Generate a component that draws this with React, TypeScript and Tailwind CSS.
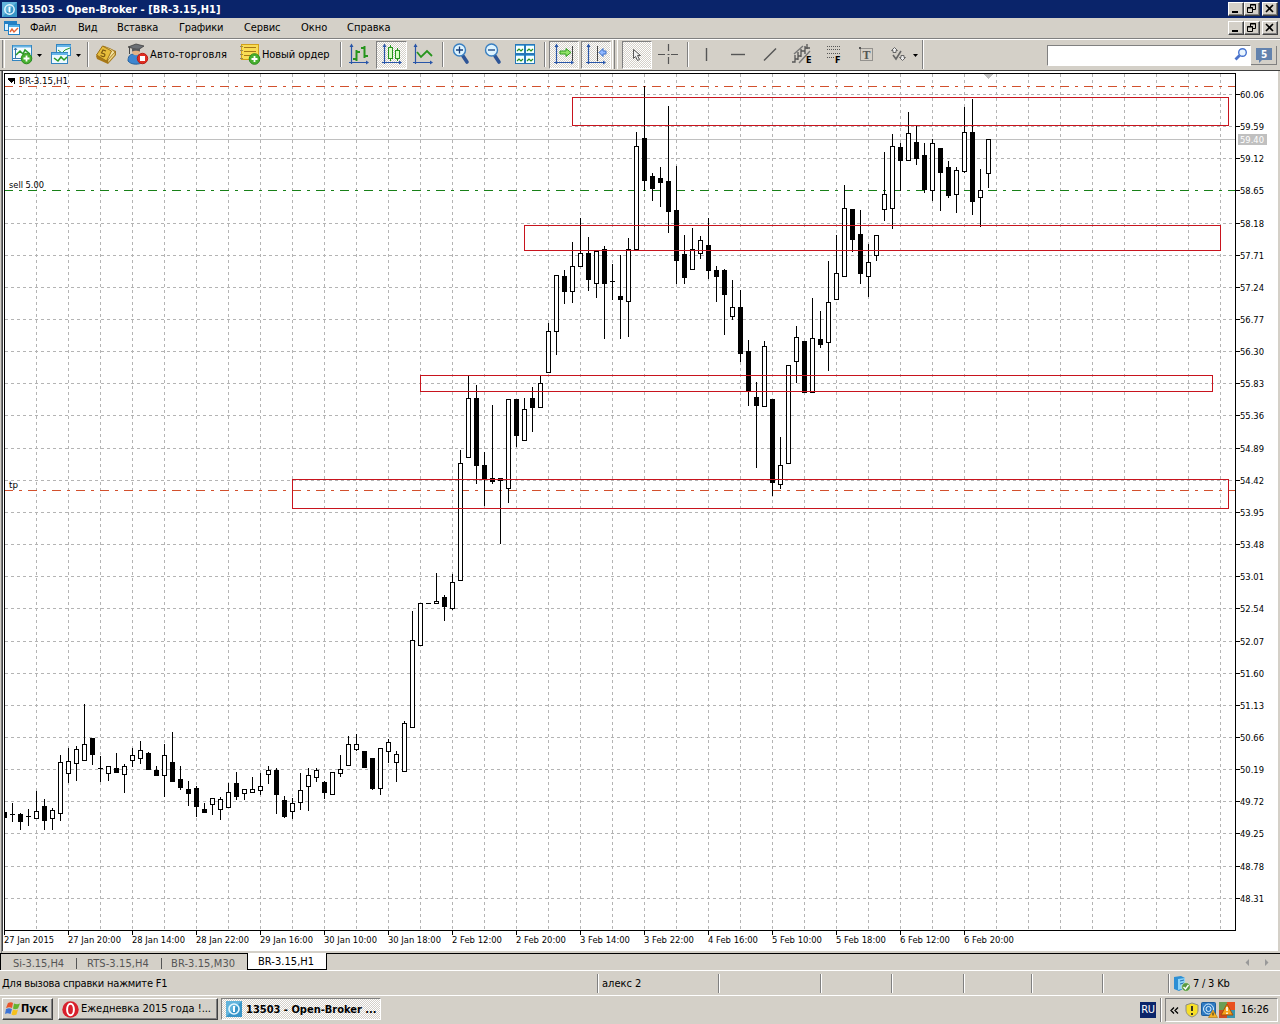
import type { ReactNode } from "react";

type Kind = 0 | 1; // 0 hollow, 1 filled
// [high, body top, body bottom, low, kind]; bars are 8px apart starting at x = 4
const BARS: [number, number, number, number, Kind][] = [
  [812, 812, 817, 817, 1], [803, 814, 814, 821, 1], [813, 814, 821, 829, 1], [809, 816, 816, 825, 1], [791, 811, 818, 818, 0],
  [799, 806, 820, 829, 1], [808, 810, 818, 829, 0], [755, 762, 813, 820, 0], [748, 761, 773, 782, 0], [746, 749, 763, 780, 0],
  [704, 744, 760, 760, 0], [738, 738, 754, 764, 1], [756, 768, 768, 781, 1], [766, 766, 773, 780, 0], [753, 768, 772, 772, 1],
  [764, 766, 774, 792, 0], [748, 755, 760, 766, 0], [741, 750, 758, 763, 0], [752, 753, 769, 769, 1], [766, 770, 775, 775, 1],
  [744, 755, 775, 796, 0], [732, 762, 781, 781, 1], [766, 779, 787, 789, 1], [781, 789, 793, 805, 1], [786, 788, 806, 816, 1],
  [803, 809, 812, 812, 1], [798, 798, 804, 814, 0], [797, 799, 809, 819, 0], [783, 792, 807, 807, 0], [772, 783, 796, 799, 1],
  [789, 789, 793, 799, 0], [777, 789, 792, 792, 0], [773, 786, 790, 794, 0], [766, 770, 774, 783, 0], [768, 770, 794, 813, 1],
  [796, 800, 816, 817, 1], [798, 803, 811, 818, 0], [773, 790, 802, 809, 0], [768, 775, 786, 810, 0], [768, 770, 777, 781, 0],
  [781, 782, 792, 798, 1], [772, 772, 794, 794, 0], [755, 769, 773, 776, 0], [736, 744, 765, 765, 0], [734, 744, 749, 750, 0],
  [751, 751, 767, 767, 1], [758, 758, 788, 789, 1], [748, 748, 788, 794, 0], [739, 742, 751, 762, 0], [751, 754, 762, 781, 0],
  [721, 723, 771, 771, 0], [611, 640, 727, 727, 0], [603, 603, 645, 645, 0], [603, 603, 603, 603, 1], [573, 601, 603, 603, 0],
  [595, 597, 606, 620, 1], [574, 582, 608, 609, 0], [450, 463, 580, 580, 0], [376, 398, 457, 457, 0], [385, 398, 465, 483, 1],
  [452, 465, 478, 505, 1], [405, 478, 481, 483, 1], [478, 478, 480, 543, 1], [399, 399, 488, 502, 0], [399, 399, 435, 446, 1],
  [398, 409, 440, 440, 0], [387, 398, 407, 431, 1], [376, 383, 407, 407, 0], [323, 331, 372, 372, 0], [275, 275, 331, 354, 0],
  [270, 276, 291, 303, 1], [242, 266, 291, 302, 0], [218, 253, 266, 266, 0], [237, 253, 279, 290, 1], [251, 251, 283, 297, 0],
  [246, 249, 283, 338, 1], [264, 281, 281, 299, 1], [255, 296, 299, 338, 1], [238, 249, 301, 336, 0], [132, 146, 249, 249, 0],
  [86, 138, 180, 190, 1], [173, 176, 188, 200, 1], [167, 178, 182, 206, 1], [106, 181, 211, 232, 1], [166, 210, 260, 283, 1],
  [235, 254, 277, 283, 1], [228, 249, 269, 269, 0], [236, 240, 253, 258, 0], [218, 245, 270, 278, 1], [266, 270, 276, 301, 1],
  [269, 270, 294, 334, 1], [280, 307, 316, 319, 0], [290, 307, 353, 361, 1], [340, 351, 391, 405, 1], [382, 397, 405, 467, 1],
  [341, 346, 406, 406, 0], [399, 399, 482, 495, 1], [437, 465, 484, 488, 0], [365, 365, 463, 463, 0], [326, 337, 361, 382, 0],
  [341, 341, 392, 392, 1], [298, 338, 392, 392, 0], [311, 339, 344, 347, 1], [261, 302, 342, 370, 0], [235, 273, 299, 299, 0],
  [185, 208, 276, 276, 0], [209, 209, 239, 251, 1], [210, 234, 273, 283, 1], [244, 262, 276, 296, 0], [235, 235, 255, 260, 0],
  [152, 194, 209, 220, 0], [134, 146, 208, 228, 0], [143, 147, 160, 190, 1], [112, 133, 160, 160, 0], [126, 142, 158, 164, 1],
  [143, 155, 189, 192, 1], [139, 143, 190, 200, 0], [148, 148, 172, 210, 1], [161, 167, 195, 197, 1], [167, 170, 194, 212, 0],
  [107, 132, 171, 172, 0], [99, 132, 201, 214, 1], [169, 190, 197, 226, 0], [139, 139, 173, 187, 0],
];

const PRICES: [number, string][] = [
  [94, "60.06"], [126, "59.59"], [158, "59.12"], [190, "58.65"], [223, "58.18"], [255, "57.71"], [287, "57.24"], [319, "56.77"],
  [351, "56.30"], [383, "55.83"], [415, "55.36"], [448, "54.89"], [480, "54.42"], [512, "53.95"], [544, "53.48"], [576, "53.01"],
  [608, "52.54"], [641, "52.07"], [673, "51.60"], [705, "51.13"], [737, "50.66"], [769, "50.19"], [801, "49.72"], [833, "49.25"],
  [866, "48.78"], [898, "48.31"],
];

const TIMES: [string, number][] = [
  ["27 Jan 2015", 50], ["27 Jan 20:00", 53], ["28 Jan 14:00", 53], ["28 Jan 22:00", 53], ["29 Jan 16:00", 53], ["30 Jan 10:00", 53],
  ["30 Jan 18:00", 53], ["2 Feb 12:00", 50], ["2 Feb 20:00", 50], ["3 Feb 14:00", 50], ["3 Feb 22:00", 50], ["4 Feb 16:00", 50],
  ["5 Feb 10:00", 50], ["5 Feb 18:00", 50], ["6 Feb 12:00", 50], ["6 Feb 20:00", 50],
];

const ZONES = [
  [572, 97, 1228, 125], [524, 225, 1220, 250], [420, 375, 1212, 391], [292, 479, 1228, 508],
];

const vGrid = Array.from({ length: 38 }, (_, i) => 36 + 32 * i);

function Chart() {
  return (
    <svg width="1280" height="882" viewBox="0 71 1280 882" className="block shrink-0 bg-white" shapeRendering="crispEdges"
      fontFamily="'DejaVu Sans Condensed','DejaVu Sans',sans-serif" fontStretch="condensed" fontSize="9.5">
      <rect x="0" y="71" width="1" height="882" fill="#d4d0c8" />
      <rect x="1" y="71" width="1" height="882" fill="#808080" />
      <rect x="1278" y="71" width="2" height="882" fill="#d4d0c8" />
      <rect x="2" y="951" width="1278" height="2" fill="#d4d0c8" />
      <g stroke="#b4b4b4" strokeWidth="1">
        {vGrid.map((x) => <path key={x} d={`M${x + 0.5} 74V930`} strokeDasharray="3 3" />)}
        {PRICES.map(([y]) => <path key={y} d={`M5 ${y + 0.5}H1235`} strokeDasharray="3 3" />)}
        <path d="M5 139.5H1235" stroke="#c0c0c0" />
      </g>
      <g fill="none" strokeDasharray="9 6 3 6">
        <path d="M4 86.5H1235" stroke="#d2502d" />
        <path d="M4 190.5H1235" stroke="#fff" strokeDasharray="none" />
        <path d="M4 190.5H1235" stroke="#188018" />
        <path d="M4 490.5H1235" stroke="#d2502d" />
      </g>
      {BARS.map(([hi, top, bot, lo, kind], i) => {
        const x = 4 + 8 * i;
        return (
          <g key={i} fill="#000">
            <rect x={x} y={hi} width="1" height={lo - hi + 1} />
            <rect x={x - 2} y={top} width="5" height={bot - top + 1} />
            {kind === 0 && <rect x={x - 1} y={top + 1} width="3" height={bot - top - 1} fill="#fff" />}
          </g>
        );
      })}
      <rect x="3" y="805" width="1" height="20" fill="#fff" />
      {ZONES.map(([a, b, c, d]) => (
        <g key={b} fill="#c8141e">
          <rect x={a} y={b} width={c - a + 1} height="1" />
          <rect x={a} y={d} width={c - a + 1} height="1" />
          <rect x={a} y={b} width="1" height={d - b + 1} />
          <rect x={c} y={b} width="1" height={d - b + 1} />
        </g>
      ))}
      <rect x="2" y="71" width="1" height="880" fill="#404040" />
      <path d="M984 74H993L988.5 79Z" fill="#c0c0c0" />
      <path d="M4.5 930.5V73.5H1235.5V930.5Z" fill="none" stroke="#000" />
      {PRICES.map(([y, t]) => (
        <g key={t}>
          <rect x="1236" y={y} width="4" height="1" />
          <text x="1240" y={y + 4} textLength="24" lengthAdjust="spacingAndGlyphs">{t}</text>
        </g>
      ))}
      <rect x="1238" y="134" width="29" height="11" fill="#c0c0c0" />
      <text x="1240" y="143" textLength="24" fill="#fff" lengthAdjust="spacingAndGlyphs">59.40</text>
      {TIMES.map(([t, w], i) => (
        <g key={t}>
          <rect x={4 + 64 * i} y="931" width="1" height="4" />
          <text x={4 + 64 * i} y="943" textLength={w} lengthAdjust="spacingAndGlyphs">{t}</text>
        </g>
      ))}
      <path d="M8 78H15V84H14V80L12 83H11L8 79Z" />
      <text x="19" y="83.5" textLength="49" lengthAdjust="spacingAndGlyphs">BR-3.15,H1</text>
      <text x="9" y="188" textLength="35" lengthAdjust="spacingAndGlyphs">sell 5.00</text>
      <text x="9" y="488" textLength="9" lengthAdjust="spacingAndGlyphs">tp</text>
    </svg>
  );
}

const RAISED = "border border-t-white border-l-white border-r-[#404040] border-b-[#404040] shadow-[inset_-1px_-1px_0_#808080]";
const SUNKEN = "border border-t-[#808080] border-l-[#808080] border-r-white border-b-white";
const DITHER = "bg-[repeating-conic-gradient(#fff_0_25%,#d4d0c8_0_50%)] bg-[length:2px_2px]";

/* A toolbar glyph: the view box starts at the glyph's own column in the bar. */
function Glyph({ x, w, children }: { x: number; w: number; children?: ReactNode }) {
  return <svg className="block shrink-0" width={w} height="30" viewBox={`${x} 40 ${w} 30`} fill="none">{children}</svg>;
}

/* A glyph inside a pressed button, whose content box starts two rows lower. */
function PressedGlyph({ x, w, children }: { x: number; w: number; children?: ReactNode }) {
  return <svg className="block shrink-0" width={w} height="26" viewBox={`${x} 42 ${w} 26`} fill="none">{children}</svg>;
}

function Sep({ x, w, at }: { x: number; w: number; at: number }) {
  return <Glyph x={x} w={w}><path d={`M${at + 0.5} 42V67`} stroke="#808080" /><path d={`M${at + 1.5} 42V67`} stroke="#fff" /></Glyph>;
}

function Caret({ x, w, at }: { x: number; w: number; at: number }) {
  return <Glyph x={x} w={w}><path d={`M${at} 54h5l-2.5 3z`} fill="#000" /></Glyph>;
}

function Axes({ x }: { x: number }) {
  return (
    <g stroke="#2855a8" fill="#2855a8">
      <path d={`M${x + 2.5} 46V64M${x} 62.5H${x + 19}`} strokeWidth="1.2" />
      <path d={`M${x + 0.5} 47l2-3.5 2 3.5zM${x + 17} 60.500l3 2-3 2z`} stroke="none" />
    </g>
  );
}

function Plus({ x, y }: { x: number; y: number }) {
  return (
    <g>
      <circle cx={x} cy={y} r="5.3" fill="#48b030" stroke="#2c8c1c" />
      <path d={`M${x - 3} ${y}h6M${x} ${y - 3}v6`} stroke="#fff" strokeWidth="1.8" />
    </g>
  );
}

function Toolbar() {
  return (
    <div className="flex h-[31px] shrink-0 items-center border-t border-white">
      <Glyph x={0} w={10}><path d="M2.5 40V68" stroke="#808080" /><path d="M4.5 40V68" stroke="#fff" /></Glyph>
      <Glyph x={10} w={24}>
        <rect x="12.5" y="45.5" width="19" height="15" fill="#f4fbff" stroke="#3385c0" />
        <path d="M13 46.5h18" stroke="#69b4e4" strokeWidth="2" />
        <path d="M15.5 48v11M13 58.5h17M14 50l1.500-2 1.500 2" stroke="#3978aa" />
        <path d="M16 55l4-4 3 3 2-4 5 4" stroke="#2a9a28" strokeWidth="1.5" />
        <Plus x={26.500} y={58.5} />
      </Glyph>
      <Caret x={34} w={12} at={37} />
      <Glyph x={46} w={28}>
        <rect x="56.500" y="44.500" width="14" height="11" fill="#e9f8ff" stroke="#3385c0" />
        <path d="M57 46h14" stroke="#65b5e9" strokeWidth="2" />
        <path d="M58 50l4 3 3-3 5-2" stroke="#2a9a28" />
        <rect x="51.500" y="52.500" width="16" height="11" fill="#eefaff" stroke="#3385c0" />
        <path d="M52 54h16" stroke="#65b5e9" strokeWidth="2" />
        <path d="M54 58l4 3 3-4 3 3 3-3" stroke="#2a9a28" strokeWidth="1.500" />
      </Glyph>
      <Caret x={74} w={10} at={76} />
      <Sep x={84} w={10} at={87} />
      <Glyph x={94} w={26}>
        <path d="M96 56l1 3 11 5 8-9v-4l-12-5z" fill="#a97816" />
        <path d="M103 46l8 3 4 3-7 8" fill="#f4e2a0" stroke="#9c7522" strokeWidth=".7" />
        <path d="M108 60l7-8v3l-7 8z" fill="#f0d888" stroke="#9c7522" strokeWidth=".6" />
        <path d="M96.500 55l6-9 9 5-5 10z" fill="#e7bd3c" stroke="#9b7017" />
        <path d="M106 51l-3-1-1.500 3 3 1c1 1 0 3-2 2.500l-2-1" stroke="#7d5910" strokeWidth="1.200" />
      </Glyph>
      <Glyph x={120} w={30}>
        <path d="M128 61c0-7 4-7 8-7 5 0 8 3 8 8-5 3-13 3-16-1z" fill="#3d86d0" stroke="#2864a0" />
        <circle cx="136" cy="51.5" r="3.800" fill="#e3b184" />
        <path d="M128 47l8-3 8 2-6 4z" fill="#6c7075" stroke="#333" strokeWidth=".7" />
        <path d="M132 48.500v3c2-1 6-1 8 0v-3z" fill="#56595d" />
        <path d="M129.500 47v7" stroke="#474747" />
        <circle cx="142.500" cy="58.500" r="5.200" fill="#df2e22" stroke="#b91c15" />
        <rect x="140" y="56" width="5" height="5" fill="#fff" />
      </Glyph>
      <span className="w-[88px] shrink-0 whitespace-nowrap text-[11px] tracking-[0.12px]">Авто-торговля</span>
      <Glyph x={238} w={24}>
        <rect x="241.500" y="44.500" width="17" height="15" fill="#f9dc54" stroke="#d1a11b" />
        <path d="M244 47.500h12M244 51.500h12M244 55.500h7" stroke="#a57618" />
        <path d="M240 46.500h3M240 50.500h3M240 54.500h3M240 58.500h3" stroke="#9c8a50" />
        <Plus x={254.500} y={59} />
      </Glyph>
      <span className="w-[76px] shrink-0 whitespace-nowrap text-[11px] tracking-[-0.08px]">Новый ордер</span>
      <Sep x={338} w={8} at={340} />
      <Glyph x={346} w={30}><Axes x={349} /><path d="M356.500 50v11M353 59h3M357 52h3M364.500 46v12M361 48h3M365 56h3" stroke="#27951d" strokeWidth="2" /></Glyph>
      <div className={`h-[28px] w-[31px] shrink-0 ${SUNKEN} ${DITHER}`}>
        <PressedGlyph x={377} w={28}><Axes x={382} /><path d="M390.500 45v16M397.500 48v13" stroke="#27951d" /><rect x="388.500" y="47.500" width="4" height="11" fill="#d9ffc5" stroke="#27951d" /><rect x="395.500" y="50.500" width="4" height="8" fill="#d9ffc5" stroke="#27951d" /></PressedGlyph>
      </div>
      <Glyph x={407} w={31}><Axes x={413} /><path d="M417 52l4 5 6-6 5 5" stroke="#27951d" strokeWidth="1.800" /></Glyph>
      <Sep x={438} w={10} at={442} />
      <Glyph x={448} w={32}><path d="M463 56l4 6" stroke="#2e5597" strokeWidth="3.600" strokeLinecap="round" /><circle cx="459.500" cy="50" r="6" fill="#def4ff" stroke="#397fc1" strokeWidth="1.400" /><path d="M456 50h7M459.500 46.500v7" stroke="#183e7a" strokeWidth="1.300" /></Glyph>
      <Glyph x={480} w={30}><path d="M495 56l4 6" stroke="#2e5597" strokeWidth="3.600" strokeLinecap="round" /><circle cx="491.500" cy="50" r="6" fill="#def4ff" stroke="#397fc1" strokeWidth="1.400" /><path d="M488 50h7" stroke="#183e7a" strokeWidth="1.300" /></Glyph>
      <Glyph x={510} w={30}>
        {[[515, 44], [525, 44], [515, 54], [525, 54]].map(([x, y]) => (
          <g key={`${x}-${y}`}><rect x={x + 0.5} y={y + 0.5} width="9" height="9" fill="#f4ffff" stroke="#2677b9" /><path d={`M${x + 1} ${y + 1.5}h8`} stroke="#5aaee3" /><path d={`M${x + 2} ${y + 7}l2-2 2 2 2-2`} stroke="#259022" strokeWidth="1.200" /></g>
        ))}
      </Glyph>
      <Sep x={540} w={9} at={544} />
      <div className={`h-[28px] w-[30px] shrink-0 ${SUNKEN} ${DITHER}`}>
        <PressedGlyph x={550} w={28}><Axes x={554} /><path d="M572.500 46v15" stroke="#444" /><path d="M560 51h6v-2.500l5 4-5 4v-2.500h-6z" fill="#91e267" stroke="#319b21" /></PressedGlyph>
      </div>
      <div className={`ml-[2px] h-[28px] w-[30px] shrink-0 ${SUNKEN} ${DITHER}`}>
        <PressedGlyph x={582} w={28}><Axes x={586} /><path d="M597.500 46v15" stroke="#444" /><path d="M606 51h-3v-2.500l-4 4 4 4v-2.500h3z" fill="#91b8ff" stroke="#3a6fc9" /></PressedGlyph>
      </div>
      <Glyph x={611} w={11}><path d="M612.500 40V69M617.500 40V69" stroke="#fff" /><path d="M614.500 40V69" stroke="#808080" /></Glyph>
      <div className={`h-[28px] w-[30px] shrink-0 ${SUNKEN} ${DITHER}`}>
        <PressedGlyph x={623} w={28}><path d="M633.500 49.500v9l2-2 2 4 2-1-2-4h3z" fill="#f0f0f0" stroke="#555" /></PressedGlyph>
      </div>
      <Glyph x={652} w={32}><path d="M658 54.500h7M671 54.500h7M668.500 44v7M668.500 57v7M667.500 54.500h2" stroke="#555" strokeWidth="1.200" /></Glyph>
      <Sep x={684} w={8} at={687} />
      <Glyph x={692} w={30}><path d="M706.500 48v13" stroke="#555" strokeWidth="1.400" /></Glyph>
      <Glyph x={722} w={34}><path d="M731 54.500h14" stroke="#555" strokeWidth="1.400" /></Glyph>
      <Glyph x={756} w={30}><path d="M764 60.500l12-12" stroke="#555" strokeWidth="1.500" /></Glyph>
      <Glyph x={786} w={34}>
        <path d="M792 62h3v-7M798 60v-8M795 59h3M801 57v-8M798 56h3M805 54v-8M801 51h4M807 49v-5M805 48h5" stroke="#555" strokeWidth="1.300" />
        <path d="M794 54l9-8M799 63l11-12" stroke="#777" strokeWidth="1.400" />
        <text x="806" y="63" fontSize="9" fontWeight="bold" fill="#000">E</text>
      </Glyph>
      <Glyph x={820} w={32}>
        <path d="M827 46.500h14M827 49.500h14M827 53.500h14M827 57.500h7" stroke="#555" strokeDasharray="1 1" />
        <text x="835" y="63" fontSize="9" fontWeight="bold" fill="#000">F</text>
      </Glyph>
      <Glyph x={852} w={30}>
        <rect x="860.500" y="48.500" width="12" height="12" stroke="#555" strokeDasharray="1 1" />
        <rect x="859" y="47" width="2" height="2" fill="#555" />
        <text x="862.500" y="59" fontSize="12" fontWeight="bold" fontFamily="Liberation Serif,serif" fill="#555">T</text>
      </Glyph>
      <Glyph x={882} w={26}>
        <path d="M894.500 47.500l3 3h-1.500v2h-3v-2h-1.500zM902.500 60.500l3-3h-1.500v-2h-3v2h-1.500z" fill="#eee" stroke="#666" />
        <path d="M893 55l3 4 5-8" stroke="#666" strokeWidth="1.600" />
      </Glyph>
      <Caret x={908} w={14} at={913} />
      <Glyph x={922} w={4}><path d="M922.500 40V69" stroke="#808080" /><path d="M923.500 40V69" stroke="#fff" /></Glyph>
      <div className="flex-1" />
      <div className={`flex h-[21px] w-[204px] justify-end bg-white ${SUNKEN}`}>
        <svg width="16" height="19" viewBox="1235 45 16 19" fill="none"><path d="M1240.500 54.500l-4 4" stroke="#4b72ca" strokeWidth="2.800" /><circle cx="1243.500" cy="51.500" r="3.800" fill="#eaf6ff" stroke="#4572cf" strokeWidth="1.400" /></svg>
      </div>
      <div className="mr-[3px] flex h-[19px] w-[26px] justify-center border-r border-b border-[#808080]">
        <svg width="18" height="18" viewBox="0 0 18 18"><path d="M1 2h16v12H7l-3 3v-3H1z" fill="#6382ad" /><text x="6" y="12" fontSize="10" fontWeight="bold" fill="#fff">5</text></svg>
      </div>
    </div>
  );
}

function WinButtons() {
  const cls = `h-[14px] w-[16px] bg-[#d4d0c8] ${RAISED}`;
  return (
    <div className="flex pr-[2px]">
      <div className={cls}><svg className="block" width="14" height="12"><path d="M3 8h6v2H3z" /></svg></div>
      <div className={cls}><svg className="block" width="14" height="12" fill="none" stroke="#000"><path d="M5.500 4V1.500h5v5H8M5 2h6M2.500 4.500h5v5h-5zM2 5h6" /></svg></div>
      <div className={`ml-[2px] ${cls}`}><svg className="block" width="14" height="12"><path d="M3 2l7 7M10 2L3 9" stroke="#000" strokeWidth="1.600" /></svg></div>
    </div>
  );
}

function BrokerLogo({ className }: { className: string }) {
  return (
    <svg className={className} viewBox="0 0 16 16" fill="none">
      <rect width="16" height="16" fill="#3895c8" /><path d="M0 0h16L0 16z" fill="#62b4dc" />
      <circle cx="8" cy="8" r="5" stroke="#e6f7ff" strokeWidth="1.600" /><path d="M8 5v6" stroke="#fff" strokeWidth="2" />
    </svg>
  );
}

const MENU: [string, string, string][] = [
  ["Файл", "w-[48px]", "tracking-[-0.3px]"], ["Вид", "w-[39px]", "tracking-[-0.2px]"], ["Вставка", "w-[62px]", "tracking-[-0.1px]"],
  ["Графики", "w-[65px]", "tracking-[-0.2px]"], ["Сервис", "w-[57px]", "tracking-[-0.1px]"], ["Окно", "w-[46px]", ""],
  ["Справка", "w-[60px]", ""],
];

function ChartTabs() {
  const divider = <span className="mt-1 h-[11px] w-px bg-[#555]" />;
  return (
    <div className="flex h-[18px] shrink-0 border-b border-white text-[11px] leading-[19px] text-[#555]">
      <div className="flex w-[247px] border-t border-l border-black pl-[12px]">
        <span className="w-[63px] whitespace-nowrap tracking-[-0.05px]">Si-3.15,H4</span>{divider}
        <span className="w-[84px] pl-[10px] whitespace-nowrap tracking-[0.1px]">RTS-3.15,H4</span>{divider}
        <span className="pl-[9px] whitespace-nowrap tracking-[0.1px]">BR-3.15,M30</span>
      </div>
      <div className="h-[17px] w-[80px] border-x border-b border-black bg-white pl-[10px] leading-[18px] whitespace-nowrap tracking-[0.05px] text-black">BR-3.15,H1</div>
      <div className="flex flex-1 justify-end border-t border-black pr-[10px]">
        <svg width="28" height="16" fill="#999"><path d="M7 5v7L3.500 8.500zM23 5v7l3.500-3.500z" /></svg>
      </div>
    </div>
  );
}

const CELLS = ["w-[121px]", "w-[102px]", "w-[71px]", "w-[72px]", "w-[68px]", "w-[71px]", "w-[66px]"];

function StatusBar() {
  return (
    <div className="flex h-[25px] shrink-0 items-center border-b border-white text-[11px]">
      <span className="w-[597px] pt-[3px] pl-[2px] tracking-[-0.2px]">Для вызова справки нажмите F1</span>
      {CELLS.map((w, i) => (
        <div key={i} className={`flex h-[19px] items-center border-l border-[#808080] pt-[3px] pl-[4px] shadow-[inset_1px_0_0_#fff] ${w}`}>{i === 0 && "алекс 2"}</div>
      ))}
      <div className="flex h-[19px] flex-1 items-center border-l border-[#808080] pl-[4px] shadow-[inset_1px_0_0_#fff]">
        <svg width="18" height="17" viewBox="0 0 18 17" fill="none">
          <path d="M1 2l7-1 4 2v10l-6 3-5-2z" fill="#2c8fd4" /><path d="M5 4l7-1v10l-7 2z" fill="#8ed4f8" /><path d="M7 6l4-1M7 9l4-1" stroke="#246fae" />
          <circle cx="13" cy="12" r="4.300" fill="#599942" stroke="#dbeccc" strokeWidth=".6" /><path d="M10.500 12l2 2 3-4" stroke="#fff" strokeWidth="1.400" />
        </svg>
        <span className="ml-[2px] pt-[3px] tracking-[-0.2px]">7 / 3 Kb</span>
      </div>
    </div>
  );
}

function Taskbar() {
  return (
    <div className="flex h-[28px] shrink-0 items-start pt-[2px] pl-[2px] text-[11px]">
      <div className={`flex h-[22px] w-[51px] items-center pl-[2px] font-bold ${RAISED}`}>
        <svg className="shrink-0" width="16" height="16" viewBox="0 0 16 16">
          <path d="M3 2c2-1 4-1 5 0L7 7C5 6 4 6 1 7z" fill="#e8552b" /><path d="M9 2.500c2 1 4 1 6 0l-2 5c-2 1-4 1-5 0z" fill="#65b32e" />
          <path d="M1 8c2-1 4-1 6 0l-1.500 5c-2-1-4-1-5.500 0z" fill="#3c74d6" /><path d="M8 8.500c2 1 4 1 5 0l-1.500 5c-2 1-4 1-5 0z" fill="#f6c11d" />
        </svg>
        <span className="tracking-[-0.1px]">Пуск</span>
      </div>
      <div className={`ml-[5px] flex h-[22px] w-[160px] items-center pl-[3px] ${RAISED}`}>
        <svg className="shrink-0" width="17" height="17" viewBox="0 0 17 17"><circle cx="8.500" cy="8.500" r="8.200" fill="#d8202c" /><ellipse cx="8.500" cy="8.500" rx="3.400" ry="5.800" fill="none" stroke="#fff" strokeWidth="2" /></svg>
        <span className="ml-[2px] whitespace-nowrap tracking-[-0.03px]">Ежедневка 2015 года !...</span>
      </div>
      <div className={`ml-[3px] flex h-[22px] w-[160px] items-center pl-[4px] font-bold ${SUNKEN} ${DITHER}`}>
        <BrokerLogo className="h-4 w-4 shrink-0" />
        <span className="ml-[4px] pt-[2px] whitespace-nowrap">13503 - Open-Broker ...</span>
      </div>
      <div className="flex-1" />
      <div className="mt-[4px] h-[16px] w-[16px] bg-[#0a246a] text-center leading-[16px] tracking-[-0.4px] text-white">RU</div>
      <div className="ml-[4px] h-[24px] w-[2px] border-l border-[#808080] bg-white" />
      <div className={`mr-[2px] ml-[3px] flex h-[24px] w-[113px] items-center pl-[4px] ${SUNKEN}`}>
        <svg width="10" height="9" fill="none" stroke="#000" strokeWidth="1.300"><path d="M4 1.500L1 4.500l3 3M8 1.500L5 4.500l3 3" /></svg>
        <svg className="ml-[4px]" width="16" height="16" viewBox="0 0 16 16"><path d="M8 1l6 2v5c0 4-3 6-6 7-3-1-6-3-6-7V3z" fill="#f7df29" stroke="#8b8b86" /><path d="M8 4v5M8 11v2" stroke="#222" strokeWidth="1.800" /></svg>
        <svg className="ml-[1px]" width="17" height="16" viewBox="0 0 17 16" fill="none"><rect x=".5" y=".5" width="14" height="13" rx="1" fill="#2e7ac2" stroke="#1d5e9d" /><circle cx="7.500" cy="7" r="5" stroke="#d9f0ff" /><circle cx="7.500" cy="7" r="2.500" stroke="#d9f0ff" /><path d="M12 8l4.500 7.500h-9z" fill="#f7b322" stroke="#a7700b" strokeWidth=".6" /><path d="M12 10.500v3" stroke="#222" /></svg>
        <svg className="ml-[1px]" width="16" height="16" viewBox="0 0 16 16" fill="none"><path d="M0 0h8v8H0z" fill="#6a9d55" /><path d="M8 0h8v8H8z" fill="#e9501f" /><path d="M0 8h8v8H0z" fill="#cd4a23" /><path d="M8 8h8v8H8z" fill="#3794ae" /><path d="M8 2l6 11H2z" fill="#f5a21b" stroke="#a94d0b" /><path d="M8 5v4M8 10.500v1.500" stroke="#fff" strokeWidth="1.600" /></svg>
        <span className="ml-[6px] pt-[1px] tracking-[-0.15px]">16:26</span>
      </div>
    </div>
  );
}

export default function App() {
  return (
    <div className="flex h-[1024px] w-[1280px] flex-col overflow-hidden bg-[#d4d0c8] font-['DejaVu_Sans_Condensed','DejaVu_Sans',sans-serif] text-black [font-stretch:condensed]">
      <div className="flex h-[18px] shrink-0 items-center bg-[#0a246a] pl-[2px] text-white">
        <BrokerLogo className="h-[15px] w-[15px] shrink-0" />
        <span className="ml-[3px] flex-1 text-[11px] leading-none font-bold tracking-[0.06px] whitespace-nowrap">13503 - Open-Broker - [BR-3.15,H1]</span>
        <WinButtons />
      </div>
      <div className="flex h-[21px] shrink-0 items-center border-b border-[#808080] pl-[4px] text-[11px]">
        <svg width="17" height="16" viewBox="0 0 17 16" fill="none"><rect x=".5" y="1.500" width="12" height="9" fill="#d9f2ff" stroke="#2380c4" /><path d="M1 3h12" stroke="#2380c4" strokeWidth="2" /><rect x="4.500" y="4.500" width="11" height="10" fill="#fff" stroke="#2380c4" /><path d="M5 6h10" stroke="#54b2e9" strokeWidth="2" /><path d="M6 12l2-3 2 3 4-4" stroke="#e26435" strokeWidth="1.400" /></svg>
        <div className="flex flex-1 pt-[1px] pl-[9px]">
          {MENU.map(([t, w, tr]) => <span key={t} className={`shrink-0 whitespace-nowrap ${w} ${tr}`}>{t}</span>)}
        </div>
        <WinButtons />
      </div>
      <Toolbar />
      <div className="h-px shrink-0 bg-[#404040]" />
      <Chart />
      <ChartTabs />
      <StatusBar />
      <Taskbar />
    </div>
  );
}
